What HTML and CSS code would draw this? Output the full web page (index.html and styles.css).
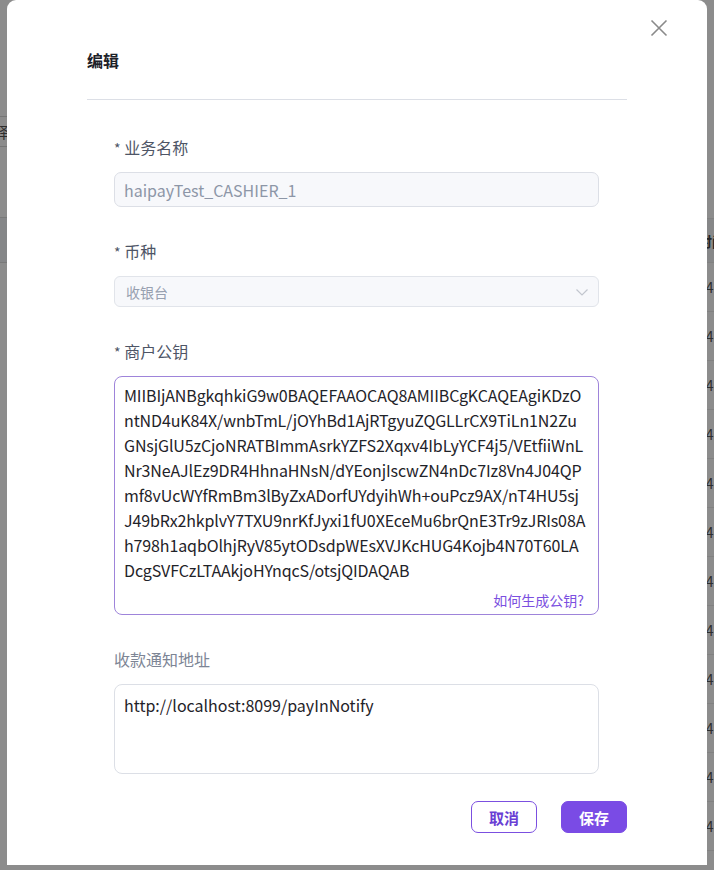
FILE: index.html
```html
<!DOCTYPE html>
<html lang="zh-CN">
<head>
<meta charset="utf-8">
<title>编辑</title>
<link rel="stylesheet" href="styles.css">
</head>
<body>
<div class="page">
  <div class="strip strip-left">
    <div class="strip-inner left-inner">
      <div class="bg-head">择</div>
      <div class="bg-row"></div>
      <div class="bg-row hover"></div>
    </div>
  </div>
  <div class="strip strip-right">
    <div class="strip-inner right-inner">
      <div class="bg-head">时间</div>
      <div class="bg-row">14:20</div>
      <div class="bg-row">14:20</div>
      <div class="bg-row">14:20</div>
      <div class="bg-row">14:20</div>
      <div class="bg-row">14:20</div>
      <div class="bg-row">14:20</div>
      <div class="bg-row">14:20</div>
      <div class="bg-row">14:20</div>
      <div class="bg-row">14:20</div>
      <div class="bg-row">14:20</div>
      <div class="bg-row">14:20</div>
      <div class="bg-row">14:20</div>
    </div>
  </div>
</div>

<div class="overlay">
  <div class="modal">
    <button class="close" aria-label="关闭">
      <svg width="18" height="18" viewBox="0 0 18 18"><path d="M1.5 1.5L16.5 16.5M16.5 1.5L1.5 16.5" stroke="#8a8a8a" stroke-width="1.6" fill="none"/></svg>
    </button>
    <h2 class="title">编辑</h2>
    <div class="divider"></div>
    <form class="form">
      <div class="field">
        <label class="label"><span class="req">*</span> 业务名称</label>
        <div class="input disabled">haipayTest_CASHIER_1</div>
      </div>
      <div class="field">
        <label class="label"><span class="req">*</span> 币种</label>
        <div class="select disabled">
          <span>收银台</span>
          <svg width="14" height="14" viewBox="0 0 14 14"><path d="M1.5 4.5L7 10L12.5 4.5" stroke="#c2c6ce" stroke-width="1.2" fill="none"/></svg>
        </div>
      </div>
      <div class="field">
        <label class="label"><span class="req">*</span> 商户公钥</label>
        <div class="textarea active">
          <div class="key">
            <div>MIIBIjANBgkqhkiG9w0BAQEFAAOCAQ8AMIIBCgKCAQEAgiKDzO</div>
            <div>ntND4uK84X/wnbTmL/jOYhBd1AjRTgyuZQGLLrCX9TiLn1N2Zu</div>
            <div>GNsjGlU5zCjoNRATBImmAsrkYZFS2Xqxv4IbLyYCF4j5/VEtfiiWnL</div>
            <div>Nr3NeAJlEz9DR4HhnaHNsN/dYEonjIscwZN4nDc7Iz8Vn4J04QP</div>
            <div>mf8vUcWYfRmBm3lByZxADorfUYdyihWh+ouPcz9AX/nT4HU5sj</div>
            <div>J49bRx2hkplvY7TXU9nrKfJyxi1fU0XEceMu6brQnE3Tr9zJRIs08A</div>
            <div>h798h1aqbOlhjRyV85ytODsdpWEsXVJKcHUG4Kojb4N70T60LA</div>
            <div>DcgSVFCzLTAAkjoHYnqcS/otsjQIDAQAB</div>
          </div>
          <a class="help">如何生成公钥?</a>
        </div>
      </div>
      <div class="field field-last">
        <label class="label light">收款通知地址</label>
        <div class="textarea small">http://localhost:8099/payInNotify</div>
      </div>
      <div class="actions">
        <button type="button" class="btn btn-outline">取消</button>
        <button type="button" class="btn btn-primary">保存</button>
      </div>
    </form>
  </div>
</div>
</body>
</html>
```

FILE: styles.css
```css
* { box-sizing: border-box; }

html, body {
  margin: 0;
  padding: 0;
  height: 100%;
}

body {
  background: #ffffff;
  font-family: "Noto Sans CJK SC", "Noto Sans", sans-serif;
  color: #1f2329;
  overflow: hidden;
}

/* background page (seen through the overlay) */
.page {
  display: flex;
  justify-content: space-between;
  height: 870px;
}

.strip {
  width: 7px;
  overflow: hidden;
}

.strip-inner {
  width: 60px;
  font-size: 14px;
  color: #333;
}

.left-inner {
  margin-left: -6px;
  padding-top: 116px;
}

.left-inner .bg-head {
  height: 31px;
  line-height: 29px;
  border-top: 1px solid #d8d8d8;
  border-bottom: 1px solid #d8d8d8;
  color: #555;
  font-size: 15px;
}

.left-inner .bg-row {
  height: 71px;
  border-bottom: 1px solid #dddddd;
}

.left-inner .bg-row.hover {
  height: 45px;
  background: #f2f4f7;
}

.right-inner {
  margin-left: -9px;
  padding-top: 218px;
}

.right-inner .bg-head {
  height: 45px;
  line-height: 44px;
  border-top: 1px solid #ececec;
  border-bottom: 1px solid #ececec;
  color: #444;
  font-weight: 700;
  background: #f5f6f8;
}

.right-inner .bg-row {
  height: 49px;
  line-height: 48px;
  border-bottom: 1px solid #ececec;
  color: #555;
}

/* overlay + modal */
.overlay {
  position: fixed;
  inset: 0;
  background: rgba(0, 0, 0, 0.45);
  display: flex;
  justify-content: center;
  align-items: flex-start;
}

.modal {
  position: relative;
  width: 700px;
  height: 865px;
  background: #ffffff;
  border-radius: 9px 9px 0 0;
  padding: 48px 80px 0 80px;
}

.close {
  position: absolute;
  top: 19px;
  right: 39px;
  width: 18px;
  height: 18px;
  padding: 0;
  border: 0;
  background: transparent;
  display: block;
}

.close svg { display: block; }

.title {
  margin: 0;
  font-size: 16px;
  line-height: 24px;
  font-weight: 700;
  color: #1d2129;
}

.divider {
  margin-top: 27px;
  height: 1px;
  background: #dcdfe6;
}

.form {
  padding: 35px 28px 0 27px;
  display: flex;
  flex-direction: column;
}

.field {
  display: flex;
  flex-direction: column;
  margin-bottom: 32px;
}

.field.field-last {
  margin-bottom: 27px;
}

.label {
  font-size: 16px;
  line-height: 24px;
  height: 24px;
  color: #4e5566;
  margin-bottom: 13px;
}

.label .req {
  font-size: 14px;
  line-height: 1;
  color: #4e5566;
}

.label.light {
  color: #7d8595;
}

.input {
  height: 35px;
  border: 1px solid #dcdfe6;
  border-radius: 7px;
  padding: 0 9px;
  font-size: 16px;
  display: flex;
  align-items: center;
}

.disabled {
  background: #f7f8fb;
  color: #8d96a7;
}

.select {
  height: 31px;
  border: 1px solid #e1e4ea;
  border-radius: 6px;
  padding: 0 9px 0 11px;
  font-size: 14px;
  display: flex;
  align-items: center;
  justify-content: space-between;
  color: #98a0b0;
}

.select svg { display: block; }

.textarea {
  border: 1px solid #dcdfe6;
  border-radius: 8px;
  padding: 7px 4px 7px 9px;
  font-size: 16px;
  line-height: 25px;
  color: #1f2329;
}

.textarea.active {
  border-color: #9e84da;
  height: 239px;
  display: flex;
  flex-direction: column;
  padding-top: 6px;
  padding-bottom: 4px;
}

.key {
  flex: 1;
  white-space: nowrap;
  letter-spacing: -0.12px;
}

.help {
  align-self: flex-end;
  font-size: 14px;
  line-height: 20px;
  color: #7b4fe0;
  margin-right: 10px;
}

.textarea.small {
  height: 90px;
  padding-top: 8px;
}

.actions {
  display: flex;
  justify-content: flex-end;
  gap: 24px;
  margin-right: -28px;
}

.btn {
  width: 66px;
  height: 32px;
  border-radius: 7px;
  font-family: "Noto Sans CJK SC", sans-serif;
  font-size: 15px;
  font-weight: 700;
  padding: 0;
  cursor: pointer;
}

.btn-outline {
  background: #ffffff;
  border: 1px solid #7b4fe0;
  color: #6a3fd4;
}

.btn-primary {
  background: #7a4be5;
  border: 1px solid #7a4be5;
  color: #ffffff;
}
```
